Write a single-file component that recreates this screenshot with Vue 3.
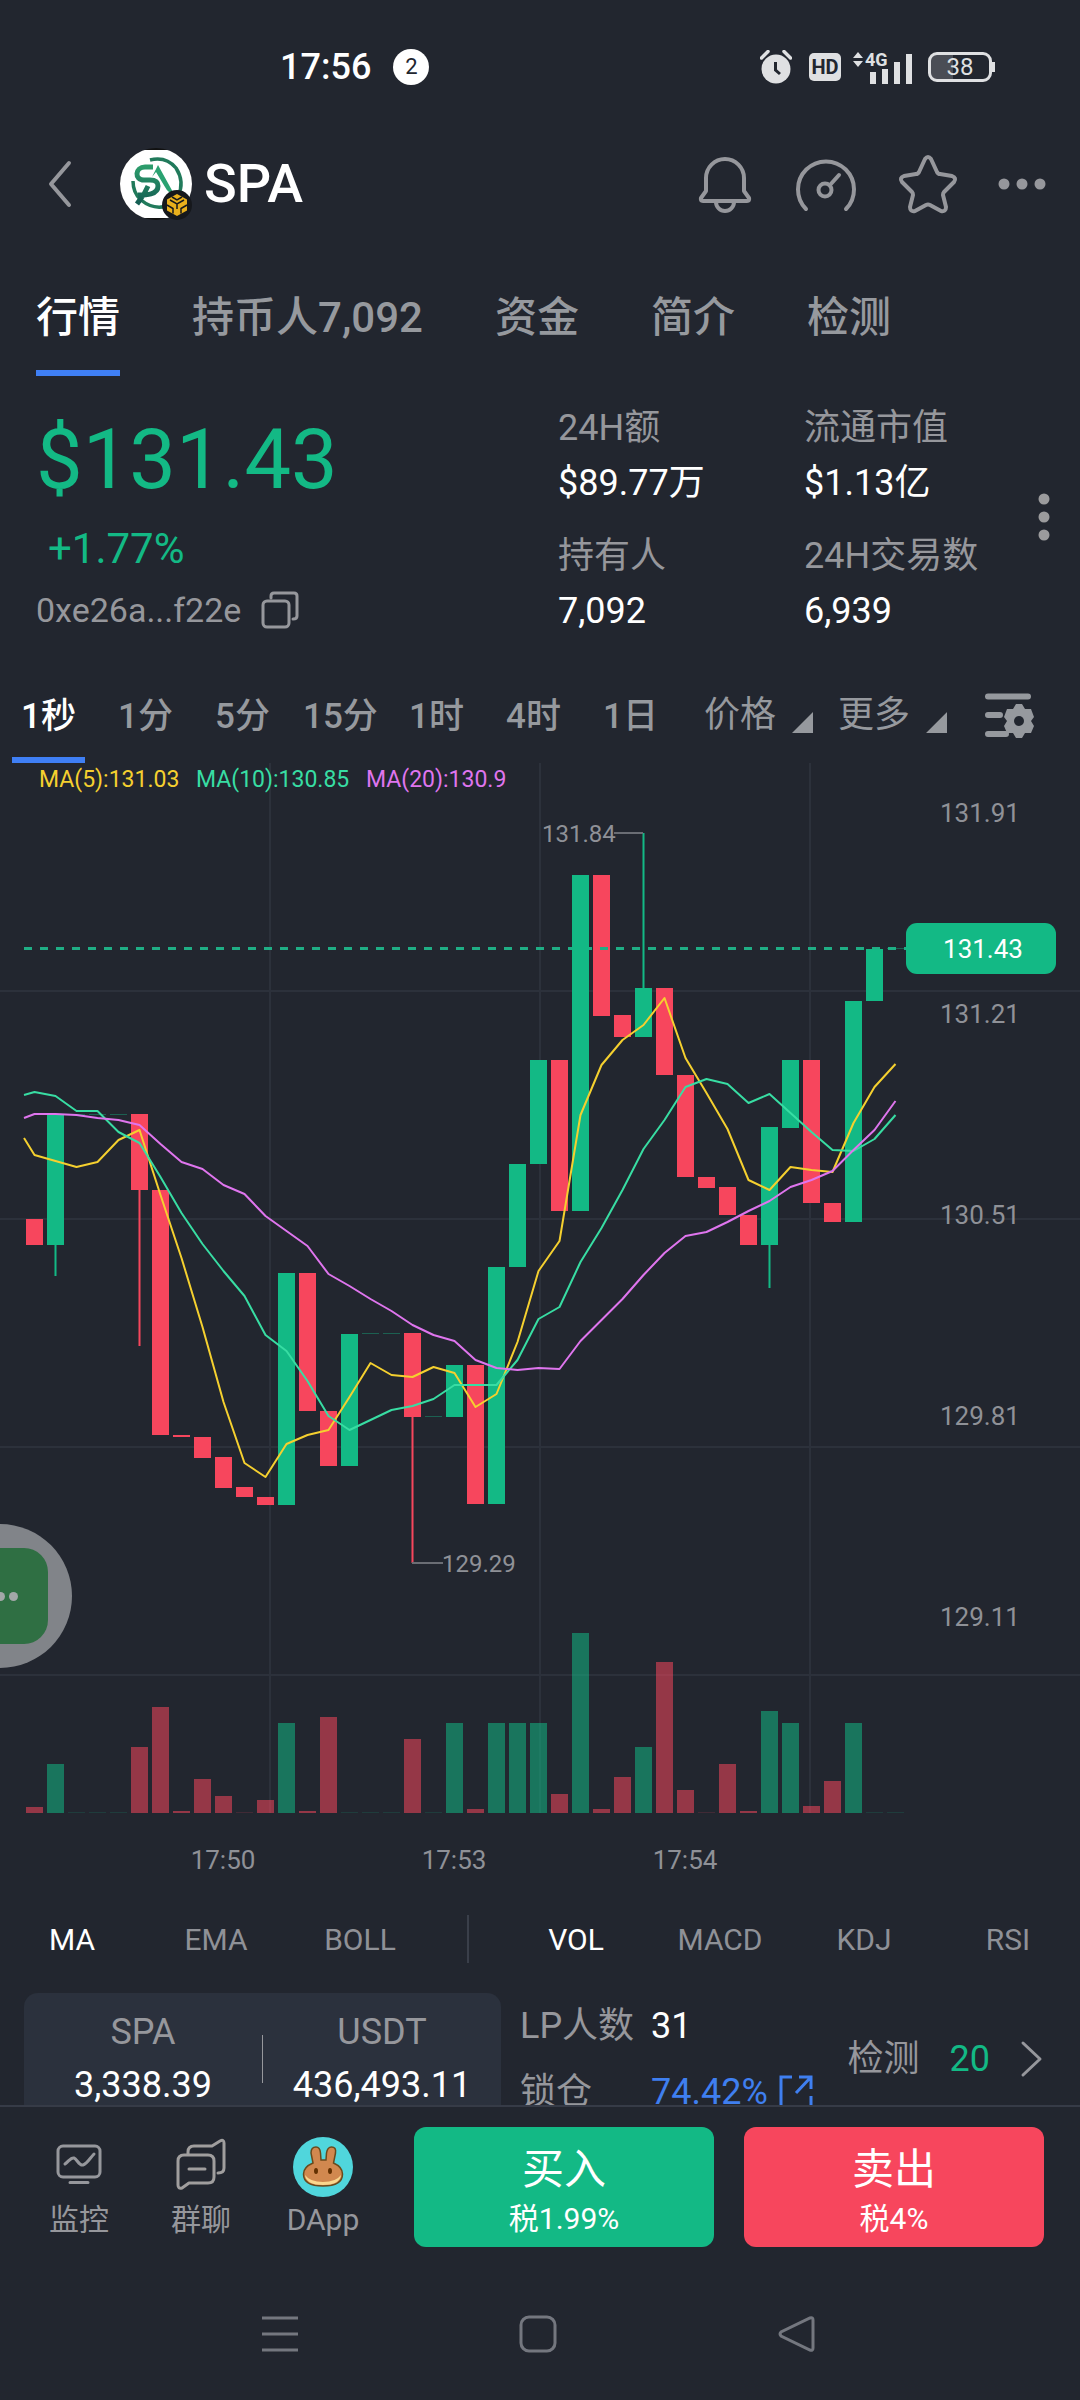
<template>
  <div class="app">
    <div class="status">
      <span class="status__time">17:56</span>
      <span class="status__count">2</span>
      <div class="status__icons">
        <svg width="32" height="34" viewBox="0 0 32 34">
          <circle cx="16" cy="19" r="14.5" fill="#dfe0e2" />
          <path d="M1.500 8L8 1.500M24 1.500L30.500 8" stroke="#dfe0e2" stroke-width="3.500" stroke-linecap="round" />
          <path d="M15.500 12v8l4.500 4" fill="none" stroke="#22262f" stroke-width="3" />
        </svg>
        <span class="status__hd">HD</span>
        <svg width="62" height="38" viewBox="0 -4 62 38">
          <path d="M1 6L6 0l5 6zM1 9h10l-5 6z" fill="#dfe0e2" />
          <text x="13" y="14" font-size="18" font-weight="700" fill="#dfe0e2">4G</text>
          <path d="M21 32V20M33 32V17M45 32V10M57 32V2" stroke="#dfe0e2" stroke-width="6" />
        </svg>
        <span class="status__battery">38</span>
      </div>
    </div>

    <header class="header">
      <button class="icon-btn header__back" aria-label="返回">
        <svg width="24" height="48" viewBox="0 0 24 48"><path d="M21 3L3 24l18 21" class="line" /></svg>
      </button>
      <div class="token">
        <svg width="72" height="72" viewBox="0 0 72 72">
          <defs>
            <clipPath id="coin"><circle cx="36" cy="36" r="36" /></clipPath>
            <linearGradient id="leaf" x1="0" y1="0" x2="0" y2="1">
              <stop offset="0" stop-color="#2c9c6b" />
              <stop offset="1" stop-color="#135c52" />
            </linearGradient>
          </defs>
          <g clip-path="url(#coin)">
            <rect width="72" height="72" fill="#111" />
            <rect y="2" width="72" height="68" fill="#fff" />
          </g>
          <path d="M30 12q16-4 26 8 9 14 2 28M13 33q0 12 8 19 12 10 26 6" fill="none" stroke="#217a5b" stroke-width="3.500" />
          <path d="M33 19h-8c-10 0-11 13-1 13h6c7 0 8 3 8 6 0 9-12 9-20 9M28 38l-4 8-7 10" fill="none" stroke="url(#leaf)" stroke-width="5" />
          <path d="M38 17L54 46q-6-1-9-7L36 24l-4 5z" fill="#2aa271" />
          <circle cx="57" cy="57" r="15" fill="#16181c" />
          <path d="M57 46l10 5.500v11L57 68l-10-5.500v-11z" fill="#e9b01c" />
          <path d="M50 52l7 4 7-4M57 56v5M47 57l6 3.500v5M67 57l-6 3.500v5M52 49l5 3 5-3" fill="none" stroke="#16181c" stroke-width="1.500" />
        </svg>
        <h1 class="token__name">SPA</h1>
      </div>
      <div class="header__actions">
        <button class="icon-btn" aria-label="提醒">
          <svg width="58" height="60" viewBox="0 0 58 60">
            <path d="M10 37V24a19 19 0 0 1 38 0v13l5 7q1 3-2 3H7q-3 0-2-3z" class="line" />
            <path d="M20 48a9 9 0 0 0 18 0" class="line" />
          </svg>
        </button>
        <button class="icon-btn" aria-label="行情速度">
          <svg width="64" height="60" viewBox="0 0 64 60">
            <path d="M12 55a28 28 0 1 1 40 0" class="line" />
            <circle cx="31" cy="36" r="6.500" class="line" />
            <path d="M36 31l9-10" class="line" />
          </svg>
        </button>
        <button class="icon-btn" aria-label="收藏">
          <svg width="60" height="60" viewBox="0 0 60 60">
            <path d="M27 5q3-4 6 0l6 13q1 2 3 2l12 2q5 2 2 6l-10 10q-1 1-1 3l3 12q0 5-5 4l-11-6q-2-1-4 0l-11 6q-5 1-5-4l3-12q0-2-1-3L4 28q-3-4 2-6l12-2q2 0 3-2z" class="line" />
          </svg>
        </button>
        <button class="icon-btn" aria-label="更多">
          <svg width="48" height="14" viewBox="4 0 48 14" fill="#96979c">
            <circle cx="10" cy="7" r="5.500" /><circle cx="28" cy="7" r="5.500" /><circle cx="46" cy="7" r="5.500" />
          </svg>
        </button>
      </div>
    </header>

    <nav class="tabs">
      <button v-for="tab in tabs" :key="tab" class="tab" :class="{ 'tab--on': tab === activeTab }" @click="activeTab = tab">{{ tab }}</button>
    </nav>

    <section class="summary">
      <div class="summary__main">
        <div class="summary__price">$131.43</div>
        <div class="summary__change">+1.77%</div>
        <div class="summary__addr">
          <span>0xe26a...f22e</span>
          <button class="icon-btn" aria-label="复制地址">
            <svg width="38" height="38" viewBox="0 0 38 38">
              <rect x="2" y="10" width="26" height="26" rx="4" class="line line--thin" />
              <path d="M10 7V5q0-3 3-3h20q3 0 3 3v20q0 3-4 3" class="line line--thin" />
            </svg>
          </button>
        </div>
      </div>
      <dl class="stats">
        <div v-for="s in stats" :key="s.label">
          <dt>{{ s.label }}</dt>
          <dd>{{ s.value }}</dd>
        </div>
      </dl>
      <button class="icon-btn summary__more" aria-label="更多数据">
        <svg width="12" height="48" viewBox="0 0 12 48" fill="#9b9b9d">
          <circle cx="6" cy="6" r="5.500" /><circle cx="6" cy="24" r="5.500" /><circle cx="6" cy="42" r="5.500" />
        </svg>
      </button>
    </section>

    <nav class="periods">
      <button v-for="p in periods" :key="p" class="period" :class="{ 'period--on': p === activePeriod }" @click="activePeriod = p">
        <span>{{ p }}</span>
      </button>
      <button class="drop">价格<i class="drop__tri"></i></button>
      <button class="drop">更多<i class="drop__tri"></i></button>
      <button class="icon-btn periods__set" aria-label="图表设置">
        <svg width="50" height="48" viewBox="0 0 50 48">
          <path d="M4 4.500h40M4 23h12M4 42h18" stroke="#96999e" stroke-width="6" stroke-linecap="round" />
          <path d="M32 12h6l3 5 6 0 3 8-3 4 3 5-3 7-6 0-3 5h-6l-3-5-6 0-3-7 3-5-3-4 3-8 6 0z" fill="#96999e" />
          <circle cx="35" cy="29" r="5" fill="#22262f" />
        </svg>
      </button>
    </nav>

    <svg class="chart" viewBox="0 763 1080 1137">
      <g class="grid">
        <path v-for="x in [270, 540, 810]" :key="x" :d="`M${x} 763V1813`" />
        <path v-for="y in [991, 1219, 1447, 1675]" :key="y" :d="`M0 ${y}H1080`" />
      </g>

      <rect v-for="(v, i) in volumes" :key="'v' + i" :x="cx(i) - 8.5" :y="v" width="17" :height="1813 - v" :class="up(i) ? 'up' : 'down'" :opacity="v > 1811.5 ? 0.15 : 0.54" />

      <path d="M24 948.500H906" class="last-line" />
      <g v-for="(c, i) in candles" :key="'c' + i" :class="up(i) ? 'up' : 'down'">
        <rect v-if="c[3]" :x="cx(i) - 1" :y="c[3]" width="2" :height="c[4] - c[3]" />
        <rect :x="cx(i) - 8.5" :y="c[1]" width="17" :height="Math.max(c[2] - c[1], 1)" :opacity="c[2] - c[1] < 1 ? 0.4 : 1" />
      </g>
      <path d="M600 948.500h8" class="last-line" />

      <polyline v-for="m in averages" :key="m.name" :points="points(m.ys)" :stroke="m.color" class="ma" />

      <path d="M614 833H643M412 1563H443" class="callout" />
      <text x="542" y="842" font-size="24" class="dim">131.84</text>
      <text x="442" y="1572" font-size="24" class="dim">129.29</text>

      <text v-for="m in averages" :key="m.name + 't'" :x="m.x" y="787" font-size="23" :fill="m.color">{{ m.name }}:{{ m.value }}</text>
      <text v-for="(p, i) in ['131.91', '131.21', '130.51', '129.81', '129.11']" :key="p" x="940" :y="822 + i * 201" font-size="26" class="dim">{{ p }}</text>
      <text v-for="(t, i) in ['17:50', '17:53', '17:54']" :key="t" :x="223 + i * 231" y="1869" font-size="26" text-anchor="middle" class="dim">{{ t }}</text>

      <rect x="906" y="923" width="150" height="51" rx="11" class="up" />
      <text x="983" y="958" font-size="26" text-anchor="middle" fill="#fff">131.43</text>
    </svg>

    <nav class="indicators">
      <button v-for="n in ['MA', 'EMA', 'BOLL']" :key="n" :class="{ on: n === 'MA' }">{{ n }}</button>
      <i class="indicators__sep"></i>
      <button v-for="n in ['VOL', 'MACD', 'KDJ', 'RSI']" :key="n" :class="{ on: n === 'VOL' }">{{ n }}</button>
    </nav>

    <section class="pool">
      <div class="pool__card">
        <div class="pool__side"><span>SPA</span><b>3,338.39</b></div>
        <i class="pool__sep"></i>
        <div class="pool__side"><span>USDT</span><b>436,493.11</b></div>
      </div>
      <div class="pool__lp">
        <span>LP人数</span><b>31</b>
        <span>锁仓</span>
        <a href="#" class="pool__lock">74.42%
          <svg width="34" height="34" viewBox="0 0 34 34"><path d="M13 2H2v30h30V21M20 2h12v12M32 2L17 18" fill="none" stroke="#3f7ff0" stroke-width="3" /></svg>
        </a>
      </div>
      <a href="#" class="pool__check">
        <span>检测</span><b>20</b>
        <svg width="24" height="38" viewBox="0 0 24 38"><path d="M3 3l17 16L3 35" class="line line--thin" /></svg>
      </a>
    </section>

    <footer class="footer">
      <div class="trade">
        <a href="#" class="trade__link">
          <svg width="60" height="60" viewBox="0 0 60 60">
            <rect x="9" y="9" width="42" height="31" rx="5" class="line line--thin" />
            <path d="M16 27c4-3 6-7 9-6s5 8 9 7 7-7 11-11M21 45.500h18" class="line line--thin" />
          </svg>
          <span>监控</span>
        </a>
        <a href="#" class="trade__link">
          <svg width="60" height="60" viewBox="0 0 60 60">
            <path d="M7 48V24q0-6 6-6h24q6 0 6 6v16q0 6-6 6H18l-7 5q-4 1-4-3z" class="line line--thin line--warm" />
            <path d="M17 17v-2q0-6 6-6h18l8-5q4-2 4 2v25q0 5-6 5M18 32h16" class="line line--thin line--warm" />
          </svg>
          <span>群聊</span>
        </a>
        <a href="#" class="trade__link">
          <svg width="60" height="60" viewBox="0 0 60 60">
            <circle cx="30" cy="30" r="30" fill="#50d6dc" />
            <path d="M20 26l-2-10q0-6 5-6 4 0 4.500 6l.5 7h5l.5-7q1-6 5-6 5 0 4 6l-2 10q9 4 9 11 0 12-19.500 12T10.500 37q0-7 9.500-11z" fill="#d1884f" stroke="#6a4a1c" stroke-width="1.500" />
            <path d="M12 38q5 7 18 7t18-7q-1 10-18 10T12 38z" fill="#fbd78d" />
            <ellipse cx="23" cy="34" rx="2" ry="3" fill="#633001" /><ellipse cx="37" cy="34" rx="2" ry="3" fill="#633001" />
          </svg>
          <span>DApp</span>
        </a>
        <div class="trade__btns">
          <button class="trade__btn trade__btn--buy"><span>买入</span><small>税1.99%</small></button>
          <button class="trade__btn trade__btn--sell"><span>卖出</span><small>税4%</small></button>
        </div>
      </div>
      <div class="sysnav">
        <button class="icon-btn" aria-label="最近任务">
          <svg width="38" height="38" viewBox="0 0 38 38"><path d="M1 3h36M1 19h36M1 35h36" class="sys" /></svg>
        </button>
        <button class="icon-btn" aria-label="主页">
          <svg width="38" height="38" viewBox="0 0 38 38"><rect x="2" y="2" width="34" height="34" rx="8" class="sys" /></svg>
        </button>
        <button class="icon-btn" aria-label="后退">
          <svg width="38" height="38" viewBox="0 0 38 38"><path d="M33 3q3-1 3 2v28q0 3-3 2L4 21q-2-2 0-4z" class="sys" /></svg>
        </button>
      </div>
    </footer>

    <button class="bubble" aria-label="聊天">
      <span class="bubble__face"><i></i><i></i><i></i></span>
    </button>
  </div>
</template>

<script setup>
import { ref } from 'vue'

const tabs = ['行情', '持币人7,092', '资金', '简介', '检测']
const activeTab = ref('行情')

const stats = [
  { label: '24H额', value: '$89.77万' },
  { label: '流通市值', value: '$1.13亿' },
  { label: '持有人', value: '7,092' },
  { label: '24H交易数', value: '6,939' },
]

const periods = ['1秒', '1分', '5分', '15分', '1时', '4时', '1日']
const activePeriod = ref('1秒')

// [direction, body top, body bottom, wick top, wick bottom]
const candles = [
  ['d', 1219, 1245], ['u', 1114, 1245, 1114, 1276], ['u', 1114, 1114], ['u', 1114, 1114], ['u', 1114, 1114],
  ['d', 1114, 1190, 1114, 1346], ['d', 1190, 1435], ['d', 1435, 1437], ['d', 1437, 1458], ['d', 1457, 1488],
  ['d', 1487, 1497], ['d', 1497, 1505], ['u', 1273, 1505], ['d', 1273, 1411], ['d', 1411, 1466],
  ['u', 1334, 1466], ['u', 1333, 1333], ['u', 1333, 1333], ['d', 1333, 1417, 1333, 1563], ['u', 1416, 1416],
  ['u', 1365, 1417], ['d', 1365, 1504], ['u', 1267, 1504], ['u', 1164, 1267], ['u', 1060, 1164],
  ['d', 1060, 1211], ['u', 875, 1211], ['d', 875, 1016], ['d', 1015, 1037], ['u', 988, 1037, 833, 1037],
  ['d', 988, 1075], ['d', 1075, 1177], ['d', 1177, 1188], ['d', 1187, 1215], ['d', 1215, 1245],
  ['u', 1127, 1245, 1127, 1288], ['u', 1060, 1128], ['d', 1060, 1203], ['d', 1203, 1222], ['u', 1001, 1222],
  ['u', 949, 1001], ['u', 948, 948],
]

const volumes = [
  1807, 1764, 1812, 1812, 1812, 1747, 1707, 1811, 1779, 1796, 1812, 1800, 1723, 1811, 1717, 1812, 1812, 1812, 1739,
  1812, 1723, 1809, 1723, 1723, 1723, 1794, 1633, 1809, 1777, 1747, 1662, 1790, 1812, 1764, 1811, 1711, 1723, 1806,
  1781, 1723, 1812, 1812,
]

// first value sits on the left clip edge, the rest on candle centres
const averages = [
  {
    name: 'MA(5)', value: '131.03', color: '#f5d02f', x: 39,
    ys: [1138, 1155, 1161, 1167, 1162, 1140, 1130, 1195, 1258, 1327, 1402, 1463, 1477, 1444, 1435, 1430, 1397, 1363, 1375, 1377, 1367, 1373, 1407, 1394, 1342, 1271, 1241, 1115, 1065, 1040, 1025, 998, 1058, 1093, 1129, 1180, 1190, 1167, 1170, 1172, 1123, 1087, 1064],
  },
  {
    name: 'MA(10)', value: '130.85', color: '#38dda3', x: 196,
    ys: [1095, 1092, 1096, 1111, 1111, 1132, 1143, 1177, 1213, 1244, 1271, 1296, 1335, 1351, 1381, 1416, 1430, 1420, 1410, 1406, 1399, 1385, 1385, 1385, 1360, 1319, 1307, 1262, 1228, 1190, 1149, 1120, 1087, 1079, 1084, 1103, 1094, 1113, 1132, 1150, 1151, 1139, 1115],
  },
  {
    name: 'MA(20)', value: '130.9', color: '#df75ee', x: 366,
    ys: [1118, 1114, 1114, 1115, 1118, 1120, 1125, 1144, 1162, 1169, 1185, 1194, 1216, 1231, 1246, 1274, 1286, 1299, 1311, 1325, 1335, 1341, 1360, 1368, 1370, 1368, 1369, 1341, 1320, 1299, 1275, 1253, 1236, 1232, 1222, 1211, 1201, 1187, 1180, 1171, 1150, 1130, 1101],
  },
]

const cx = (i) => 34.5 + i * 21
const up = (i) => candles[i][0] === 'u'
const points = (ys) => ys.map((y, i) => `${i ? cx(i - 1) : 24},${y}`).join(' ')
</script>

<style>
body {
  background: #22262f;
}
</style>

<style scoped>
.app {
  position: relative;
  display: flex;
  flex-direction: column;
  height: 100vh;
  overflow: hidden;
  background: #22262f;
  color: #fff;
  font-family: Roboto, 'Noto Sans CJK SC', sans-serif;
}
button {
  padding: 0;
  border: 0;
  background: none;
  color: inherit;
  font: inherit;
  white-space: nowrap;
}
a {
  color: inherit;
  text-decoration: none;
}
svg {
  display: block;
  flex: none;
}
.line {
  fill: none;
  stroke: #96979c;
  stroke-width: 4;
  stroke-linecap: round;
  stroke-linejoin: round;
}
.line--thin {
  stroke-width: 3;
}
.line--warm {
  stroke: #a09e9e;
}
.icon-btn {
  display: flex;
  align-items: center;
}

/* status bar */
.status {
  display: flex;
  flex: none;
  align-items: center;
  height: 134px;
  padding: 0 88px 0 280px;
}
.status__time {
  font-size: 36px;
  font-weight: 500;
}
.status__count {
  width: 36px;
  margin-left: 22px;
  border-radius: 50%;
  background: #fff;
  color: #22262f;
  font-size: 22px;
  line-height: 36px;
  text-align: center;
}
.status__icons {
  display: flex;
  align-items: center;
  margin-left: auto;
  color: #dfe0e2;
}
.status__hd {
  width: 32px;
  margin: 0 11px 0 17px;
  border-radius: 5px;
  background: #dfe0e2;
  color: #22262f;
  font-size: 20px;
  font-weight: 700;
  line-height: 28px;
  text-align: center;
}
.status__battery {
  position: relative;
  box-sizing: border-box;
  width: 64px;
  height: 30px;
  margin-left: 14px;
  border: 3px solid #dfe0e2;
  border-radius: 9px;
  background: linear-gradient(90deg, #4a4d55 38%, transparent 38%);
  font-size: 24px;
  line-height: 24px;
  text-align: center;
}
.status__battery::after {
  content: '';
  position: absolute;
  top: 7px;
  right: -6px;
  width: 3px;
  height: 10px;
  background: #dfe0e2;
}

/* header */
.header {
  display: flex;
  flex: none;
  align-items: center;
  height: 100px;
  padding: 0 34px 0 48px;
}
.token {
  display: flex;
  align-items: center;
  gap: 12px;
  margin-left: 48px;
}
.token__name {
  margin: 0;
  font-size: 54px;
  font-weight: 500;
  line-height: 72px;
}
.header__actions {
  display: flex;
  align-items: center;
  gap: 40px;
  margin-left: auto;
}

/* tabs */
.tabs {
  display: flex;
  flex: none;
  gap: 72px;
  padding: 0 36px;
}
.tab {
  padding: 54px 0 22px;
  border-bottom: 6px solid transparent;
  color: #96999e;
  font-size: 42px;
  font-weight: 500;
  line-height: 60px;
}
.tab--on {
  border-color: #3f7ff5;
  color: #fff;
}

/* price summary */
.summary {
  display: flex;
  flex: none;
  align-items: flex-start;
  height: 281px;
  padding: 0 30px 0 36px;
}
.summary__main {
  flex: 1;
  padding-top: 29px;
}
.summary__price {
  color: #13b985;
  font-size: 83px;
  line-height: 110px;
}
.summary__change {
  padding-left: 12px;
  color: #13b985;
  font-size: 42px;
  line-height: 68px;
}
.summary__addr {
  display: flex;
  gap: 20px;
  color: #96979c;
  font-size: 34px;
  line-height: 54px;
}
.stats {
  display: grid;
  grid-template-columns: 246px 234px;
  gap: 18px 0;
  margin: 25px 0 0;
  font-size: 36px;
  line-height: 55px;
}
.stats dt {
  color: #96979c;
}
.stats dd {
  margin: 0;
}
.summary__more {
  margin-top: 117px;
}

/* chart periods */
.periods {
  display: flex;
  flex: none;
  align-items: flex-start;
  padding-right: 46px;
}
.period {
  width: 97px;
  padding: 0 12px;
  color: #96999e;
  font-size: 35px;
  font-weight: 500;
  line-height: 60px;
}
.period span {
  display: block;
  padding: 30px 0 10px;
  border-bottom: 6px solid transparent;
}
.period--on {
  color: #fff;
}
.period--on span {
  border-color: #3f7ff5;
}
.drop {
  display: flex;
  align-items: flex-end;
  gap: 16px;
  margin: 28px 0 0 25px;
  color: #96999e;
  font-size: 36px;
  line-height: 60px;
}
.drop__tri {
  width: 21px;
  height: 21px;
  margin-bottom: 12px;
  background: #96999e;
  clip-path: polygon(100% 0, 100% 100%, 0 100%);
}
.periods__set {
  margin: 35px 0 0 auto;
}

/* chart */
.chart {
  width: 100%;
}
.grid path {
  stroke: #2c313b;
  stroke-width: 2;
}
.up {
  fill: #13b985;
}
.down {
  fill: #f7465d;
}
.last-line {
  stroke: #1fae85;
  stroke-width: 3;
  stroke-dasharray: 8 8;
}
.ma {
  fill: none;
  stroke-width: 2;
  stroke-linejoin: round;
}
.callout {
  stroke: #6a6d74;
  stroke-width: 2;
}
.dim {
  fill: #8f9197;
}

/* indicators */
.indicators {
  display: flex;
  flex: none;
  align-items: center;
  height: 78px;
  padding-bottom: 15px;
}
.indicators button {
  flex: 2;
  color: #8f9197;
  font-size: 30px;
}
.indicators .on {
  color: #fff;
}
.indicators__sep {
  flex: 1;
  height: 48px;
  background: linear-gradient(#3a3f4a, #3a3f4a) center / 2px 100% no-repeat;
}

/* liquidity pool */
.pool {
  display: flex;
  flex: 1;
  align-items: flex-start;
  min-height: 0;
  padding: 0 36px 0 24px;
  overflow: hidden;
  font-size: 36px;
}
.pool b {
  font-weight: 400;
}
.pool__card {
  display: flex;
  flex: none;
  align-items: center;
  width: 477px;
  height: 132px;
  border-radius: 14px;
  background: #2b313d;
  line-height: 53px;
}
.pool__side {
  display: flex;
  flex: 1;
  flex-direction: column;
  align-items: center;
}
.pool__side span,
.pool__lp span,
.pool__check span {
  color: #96979c;
}
.pool__sep {
  width: 1px;
  height: 48px;
  background: #96979c;
}
.pool__lp {
  display: grid;
  grid-template-columns: 131px auto;
  margin-left: 19px;
  line-height: 66px;
}
.pool__lock {
  display: flex;
  align-items: center;
  gap: 11px;
  color: #3f7ff0;
}
.pool__check {
  display: flex;
  align-items: center;
  gap: 30px;
  margin-left: auto;
  line-height: 132px;
}
.pool .pool__check b {
  color: #13b985;
}

/* bottom bar */
.footer {
  flex: none;
  border-top: 2px solid #363b47;
}
.trade {
  display: flex;
  padding: 20px 36px 0 18px;
}
.trade__link {
  display: flex;
  flex-direction: column;
  align-items: center;
  width: 122px;
  padding-top: 10px;
  color: #96979c;
  font-size: 30px;
  line-height: 46px;
}
.trade__btns {
  display: flex;
  flex: 1;
  gap: 30px;
  margin-left: 30px;
}
.trade__btn {
  display: flex;
  flex: 1;
  flex-direction: column;
  align-items: center;
  padding: 17px 0 5px;
  border-radius: 12px;
  font-size: 42px;
  line-height: 52px;
}
.trade__btn small {
  font-size: 30px;
  line-height: 46px;
}
.trade__btn--buy {
  background: #13b985;
}
.trade__btn--sell {
  background: #f7465d;
}
.sysnav {
  display: flex;
  justify-content: center;
  gap: 220px;
  height: 132px;
  padding: 21px 4px 0 0;
}
.sys {
  fill: none;
  stroke: #74777f;
  stroke-width: 3;
}

/* floating chat bubble, half off screen */
.bubble {
  position: absolute;
  top: 1524px;
  left: -72px;
  display: flex;
  align-items: center;
  justify-content: center;
  width: 144px;
  height: 144px;
  border-radius: 50%;
  background: #818489;
}
.bubble__face {
  display: flex;
  align-items: center;
  justify-content: center;
  gap: 4px;
  width: 96px;
  height: 96px;
  border-radius: 24px;
  background: #2f6f43;
}
.bubble__face i {
  width: 9px;
  height: 9px;
  border-radius: 50%;
  background: #a3a7a8;
}
</style>
